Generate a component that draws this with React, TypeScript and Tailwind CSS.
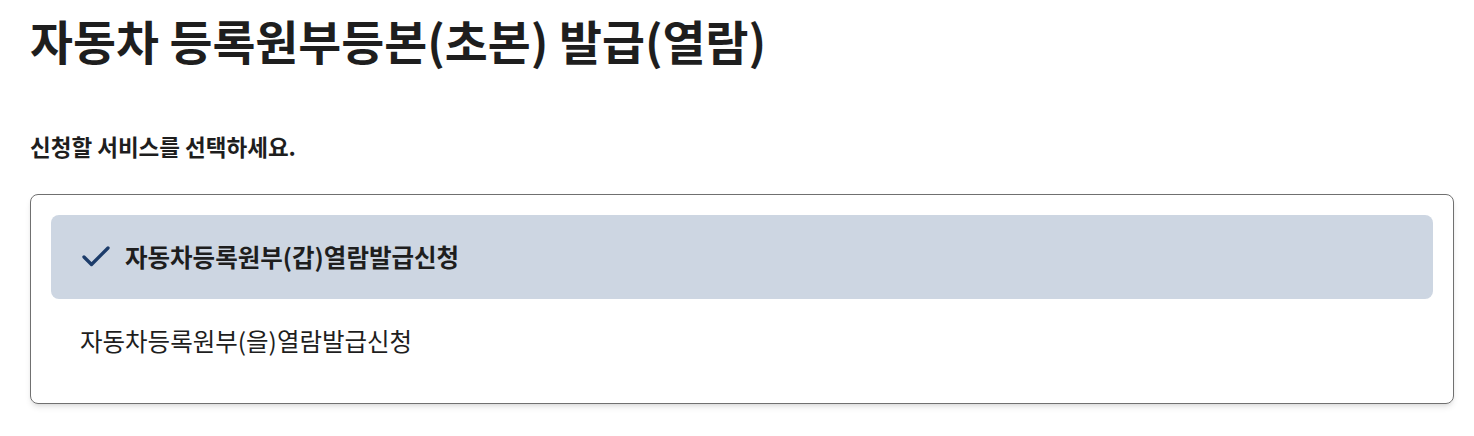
import { Check } from "lucide-react"

const font = { fontFamily: '"Noto Sans CJK KR", "Noto Sans", sans-serif' }

export default function App() {
  return (
    <div className="bg-white min-h-[436px] px-[30px] pt-[6px] text-[#1e1e1e]" style={font}>
      {/* TITLE */}
      <h1 className="text-[46.7px] font-bold leading-[68px]">
        자동차 등록원부등본(초본) 발급(열람)
      </h1>

      <p className="mt-[56px] text-[22.5px] font-bold leading-[32px]">
        신청할 서비스를 선택하세요.
      </p>

      {/* SERVICE LIST */}
      <div className="mt-[32px] w-[1424px] border border-[#707070] rounded-lg p-[20px] shadow-md">
        <div className="flex items-center h-[84px] rounded-lg bg-[#cdd6e2] pl-[27px] gap-[11px]">
          <Check className="w-[36px] h-[36px] text-[#1c3c6a]" strokeWidth={2.2} />
          <span className="text-[24.5px] font-bold">자동차등록원부(갑)열람발급신청</span>
        </div>
        <div className="flex items-center h-[84px] pl-[29px]">
          <span className="text-[24.5px]">자동차등록원부(을)열람발급신청</span>
        </div>
      </div>
    </div>
  )
}
